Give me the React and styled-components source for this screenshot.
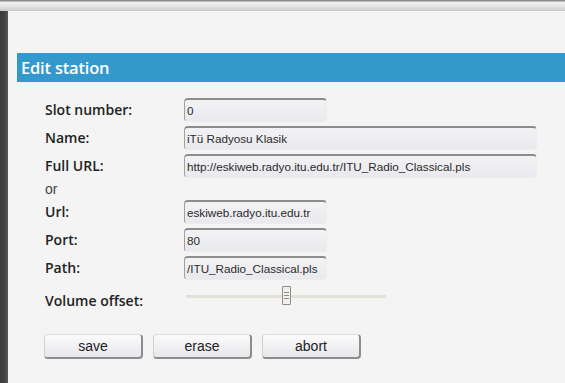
import React from "react";
import styled, { createGlobalStyle } from "styled-components";

const Global = createGlobalStyle`
  html, body { margin: 0; padding: 0; }
  body {
    width: 565px;
    height: 383px;
    overflow: hidden;
    background:
      linear-gradient(to bottom, #8a8a8a 0, #8a8a8a 1px, #f2f2f2 2px, #e6e6e6 6px, #c9c9c9 11px, transparent 11px),
      linear-gradient(to right, #3a3a3a 0, #444 5px, #5a5a5a 8px);
  }
`;

const Page = styled.div`
  display: flex;
  height: 383px;
  box-sizing: border-box;
  padding: 11px 0 0 8px;
`;

const Panel = styled.div`
  flex: 1;
  background: #f4f4f4;
  padding-top: 42px;
  font-family: "Open Sans", "Liberation Sans", sans-serif;
`;

const Header = styled.h2`
  margin: 0 0 0 9px;
  height: 29px;
  line-height: 29px;
  padding-left: 4px;
  background: #3399cc;
  color: #fff;
  font-size: 16.5px;
  font-weight: 600;
  letter-spacing: -0.2px;
`;

const Form = styled.div`
  display: grid;
  grid-template-columns: 139px max-content;
  row-gap: 4px;
  margin: 16px 0 0 37px;
  align-items: center;
`;

const Label = styled.div`
  font-size: 14px;
  font-weight: 600;
  color: #222;
  line-height: 18px;
  align-self: ${(p) => (p.$low ? "end" : "center")};
  transform: translateY(${(p) => (p.$low ? "2px" : "0")});
`;

const OrRow = styled.div`
  grid-column: 1 / -1;
  font-family: "Liberation Sans", Arial, sans-serif;
  font-size: 14px;
  color: #444;
  height: 14px;
  line-height: 14px;
`;

const Input = styled.input`
  box-sizing: border-box;
  width: ${(p) => (p.$wide ? "353px" : "143px")};
  height: 24px;
  margin: 0;
  padding: 0 2px;
  font-family: "Liberation Sans", Arial, sans-serif;
  font-size: 11.7px;
  color: #2a2a2a;
  border-style: solid;
  border-width: 2px 1px 1px 1px;
  border-color: #8c8c8c #ececec #ececec #a0a0a0;
  border-radius: 4px;
  background: linear-gradient(to bottom, #f3f3f5, #e9e9ee);
  outline: none;
`;

const SliderCell = styled.div`
  align-self: start;
  height: 24px;
  padding-top: 6px;
  box-sizing: border-box;
`;

const Track = styled.div`
  position: relative;
  width: 200px;
  height: 3px;
  margin-left: 2px;
  margin-top: 5px;
  background: #e3dfd9;
`;

const Thumb = styled.div`
  position: absolute;
  left: 96px;
  top: -9px;
  width: 9px;
  height: 19px;
  box-sizing: border-box;
  border: 1px solid #8f8a84;
  border-radius: 1px;
  background: #f2f0ee;
  display: flex;
  flex-direction: column;
  align-items: center;
  justify-content: center;
  gap: 2px;
`;

const Grip = styled.span`
  display: block;
  width: 5px;
  height: 1px;
  background: #8f8a84;
`;

const Buttons = styled.div`
  display: flex;
  gap: 10px;
  margin: 26px 0 0 36px;
`;

const Button = styled.button`
  box-sizing: border-box;
  width: 99px;
  height: 25px;
  margin: 0;
  padding: 0;
  font-family: "Liberation Sans", Arial, sans-serif;
  font-size: 14px;
  color: #222;
  border-style: solid;
  border-width: 1px 2px 2px 1px;
  border-color: #dcdcdc #8c8c8c #8c8c8c #d0d0d0;
  border-radius: 4px;
  background: linear-gradient(to bottom, #fbfbfb, #e7e7ec);
`;

export default function App() {
  return (
    <>
      <Global />
      <Page>
        <Panel>
          <Header>Edit station</Header>
          <Form>
            <Label>Slot number:</Label>
            <Input defaultValue="0" />
            <Label>Name:</Label>
            <Input $wide defaultValue="iTü Radyosu Klasik" />
            <Label>Full URL:</Label>
            <Input $wide defaultValue="http://eskiweb.radyo.itu.edu.tr/ITU_Radio_Classical.pls" />
            <OrRow>or</OrRow>
            <Label>Url:</Label>
            <Input defaultValue="eskiweb.radyo.itu.edu.tr" />
            <Label>Port:</Label>
            <Input defaultValue="80" />
            <Label>Path:</Label>
            <Input defaultValue="/ITU_Radio_Classical.pls" />
            <Label $low>Volume offset:</Label>
            <SliderCell>
              <Track>
                <Thumb>
                  <Grip />
                  <Grip />
                  <Grip />
                </Thumb>
              </Track>
            </SliderCell>
          </Form>
          <Buttons>
            <Button>save</Button>
            <Button>erase</Button>
            <Button>abort</Button>
          </Buttons>
        </Panel>
      </Page>
    </>
  );
}
